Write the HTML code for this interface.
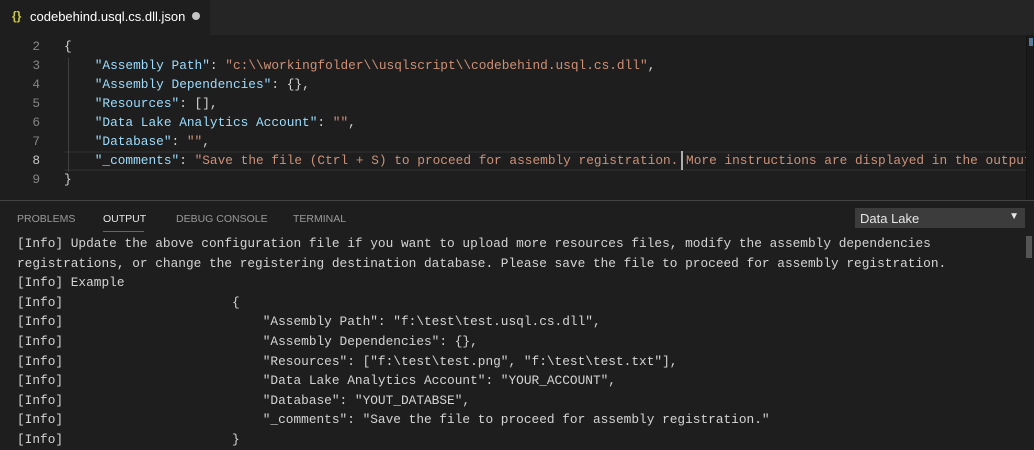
<!DOCTYPE html><html><head><style>
body{margin:0;width:1034px;height:450px;background:#1e1e1e;overflow:hidden;position:relative;font-family:"Liberation Mono",monospace;}
.tabbar{position:absolute;left:0;top:0;width:1034px;height:35px;background:#252526;}
.tab{position:absolute;left:0;top:0;width:210px;height:35px;background:#1e1e1e;font-family:"Liberation Sans",sans-serif;font-size:13px;color:#fff;}
.mono{font-size:12.8px;white-space:pre;position:absolute;line-height:19px;}
.ln{position:absolute;left:0;width:40px;text-align:right;color:#858585;font-size:12.8px;line-height:19px;}
.k{color:#9cdcfe}.s{color:#ce9178}.p{color:#d4d4d4}
.out{position:absolute;left:17px;top:234px;color:#d4d4d4;font-size:12.8px;line-height:19.6px;white-space:pre;}
.pt{position:absolute;top:213px;font-family:"Liberation Sans",sans-serif;font-size:10.5px;color:#9a9a9a;}
</style></head><body>
<div class="tabbar"><div class="tab"><span style="position:absolute;left:12px;top:9px;color:#cbcb41;font-weight:bold;font-size:12px">{}</span><span style="position:absolute;left:30px;top:9px">codebehind.usql.cs.dll.json</span><span style="position:absolute;left:192px;top:12px;width:8px;height:8px;border-radius:50%;background:#c5c5c5"></span></div></div>
<div style="position:absolute;left:64px;top:151px;width:962px;height:20px;border-top:2px solid #282828;border-bottom:2px solid #282828;box-sizing:border-box"></div>
<div style="position:absolute;left:68px;top:58px;width:1px;height:114px;background:#404040"></div>
<div class="ln" style="top:37px">2<br>3<br>4<br>5<br>6<br>7<br><span style="color:#c6c6c6">8</span><br>9</div>
<div class="mono" style="left:64px;top:37px"><span class="p">{</span>
    <span class="k">"Assembly Path"</span><span class="p">: </span><span class="s">"c:\\workingfolder\\usqlscript\\codebehind.usql.cs.dll"</span><span class="p">,</span>
    <span class="k">"Assembly Dependencies"</span><span class="p">: {},</span>
    <span class="k">"Resources"</span><span class="p">: [],</span>
    <span class="k">"Data Lake Analytics Account"</span><span class="p">: </span><span class="s">""</span><span class="p">,</span>
    <span class="k">"Database"</span><span class="p">: </span><span class="s">""</span><span class="p">,</span>
    <span class="k">"_comments"</span><span class="p">: </span><span class="s">"Save the file (Ctrl + S) to proceed for assembly registration. More instructions are displayed in the output</span>
<span class="p">}</span></div>
<div style="position:absolute;left:681px;top:151px;width:2px;height:19px;background:#aeafad"></div>
<div style="position:absolute;left:1026px;top:35px;width:8px;height:165px;background:#1a1a1a;border-left:1px solid #141414"></div>
<div style="position:absolute;left:1029px;top:38px;width:4px;height:8px;background:#5a7a9a"></div>
<div style="position:absolute;left:0;top:200px;width:1034px;height:1px;background:#444"></div>
<div class="pt" style="left:17px">PROBLEMS</div>
<div class="pt" style="left:103px;color:#e7e7e7">OUTPUT</div>
<div style="position:absolute;left:103px;top:231px;width:41px;height:1px;background:#666"></div>
<div class="pt" style="left:176px">DEBUG CONSOLE</div>
<div class="pt" style="left:293px">TERMINAL</div>
<div style="position:absolute;left:855px;top:208px;width:170px;height:20px;background:#3c3c3c;font-family:'Liberation Sans',sans-serif;font-size:13px;color:#e7e7e7"><span style="position:absolute;left:5px;top:3px">Data Lake</span><span style="position:absolute;right:6px;top:3px;font-size:10px">▼</span></div>
<div style="position:absolute;left:1026px;top:236px;width:6px;height:22px;background:#555"></div>
<div class="out">[Info] Update the above configuration file if you want to upload more resources files, modify the assembly dependencies
registrations, or change the registering destination database. Please save the file to proceed for assembly registration.
[Info] Example
[Info]                      {
[Info]                          "Assembly Path": "f:\test\test.usql.cs.dll",
[Info]                          "Assembly Dependencies": {},
[Info]                          "Resources": ["f:\test\test.png", "f:\test\test.txt"],
[Info]                          "Data Lake Analytics Account": "YOUR_ACCOUNT",
[Info]                          "Database": "YOUT_DATABSE",
[Info]                          "_comments": "Save the file to proceed for assembly registration."
[Info]                      }</div>
</body></html>
